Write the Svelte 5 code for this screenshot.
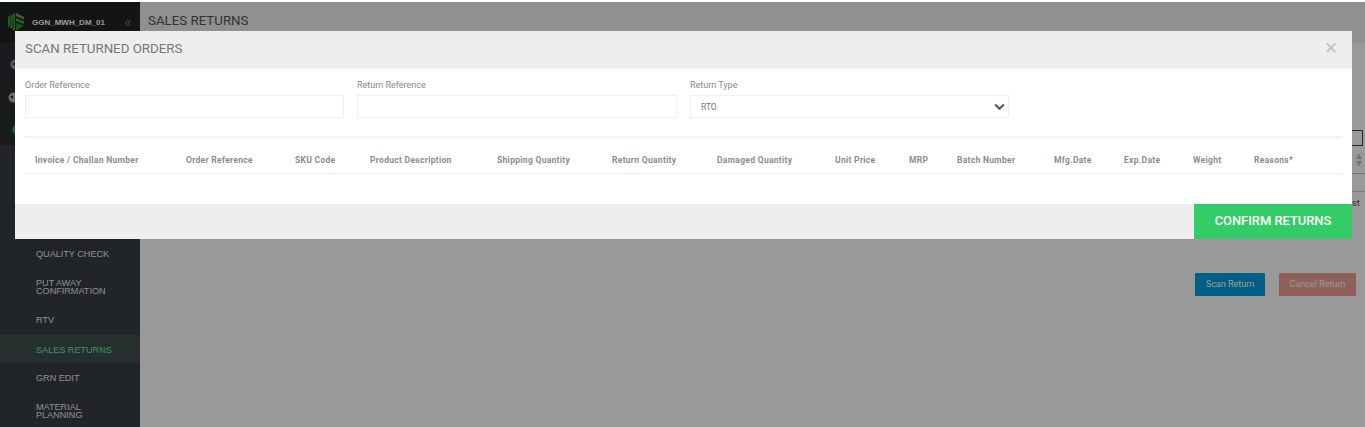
<script>
  const columns = [
    { label: 'Invoice / Challan Number', width: 151 },
    { label: 'Order Reference', width: 109 },
    { label: 'SKU Code', width: 75 },
    { label: 'Product Description', width: 127 },
    { label: 'Shipping Quantity', width: 115 },
    { label: 'Return Quantity', width: 105 },
    { label: 'Damaged Quantity', width: 118 },
    { label: 'Unit Price', width: 74 },
    { label: 'MRP', width: 48 },
    { label: 'Batch Number', width: 97 },
    { label: 'Mfg.Date', width: 70 },
    { label: 'Exp.Date', width: 69 },
    { label: 'Weight', width: 61 },
    { label: 'Reasons*', width: 78 }
  ];

  // only the left edge of these peeks out from under the modal
  const hiddenIcons = [
    { colour: '#8f9aa2', top: 59, left: 10 },
    { colour: '#b4b4b4', top: 92, left: 8 },
    { colour: '#35b07c', top: 124, left: 12 }
  ];
</script>

<div class="page">
  <aside class="sidebar">
    <div class="brand">
      <svg class="logo" width="18" height="20" viewBox="0 0 18 20">
        <path d="M8 1 L1 5 V14 L8 19 Z" fill="#379a35" />
        <path d="M3.4 4 V15.5 M5.8 3 V17.5" stroke="#17341a" stroke-width="0.6" />
        <path d="M9 1 L17 5 V7.5 L9 4 Z" fill="#62b04e" />
        <path d="M9 6 L17 9.5 V12 L9 9 Z" fill="#3fa23c" />
        <path d="M9 11 L17 13.5 L9 19 Z" fill="#238a2a" />
      </svg>
      <span class="warehouse">GGN_MWH_DM_01</span>
      <span class="collapse">«</span>
    </div>
    <div class="icons">
      {#each hiddenIcons as icon}
        <svg class="icon" style="top: {icon.top - 43}px; left: {icon.left}px" width="11" height="11" viewBox="0 0 11 11">
          <circle cx="5.5" cy="5.5" r="5" fill={icon.colour} />
          <circle cx="4" cy="5" r="1.3" fill="#2a2d31" />
        </svg>
      {/each}
    </div>
    <div class="spacer"></div>
    <nav class="menu">
      <a>QUALITY CHECK</a>
      <a class="two">PUT AWAY CONFIRMATION</a>
      <a class="tall">RTV</a>
      <a class="active">SALES RETURNS</a>
      <a>GRN EDIT</a>
      <a class="two">MATERIAL PLANNING</a>
    </nav>
  </aside>

  <main class="content">
    <header class="topbar"><h1>SALES RETURNS</h1></header>
    <div class="behind">
      <div class="filter-box"></div>
      <div class="behind-head">
        <svg width="8" height="14" viewBox="0 0 8 14"><path d="M4 1 L7 6 H1 Z M4 13 L1 8 H7 Z" fill="#bbb" /></svg>
      </div>
      <div class="behind-row"></div>
      <div class="behind-note">st</div>
      <div class="actions">
        <button class="scan">Scan Return</button>
        <button class="cancel">Cancel Return</button>
      </div>
    </div>
  </main>
</div>

<div class="overlay"></div>

<section class="modal">
  <header class="modal-head">
    <h2>SCAN RETURNED ORDERS</h2>
    <span class="close">×</span>
  </header>
  <div class="modal-body">
    <div class="fields">
      <label class="field">
        <span>Order Reference</span>
        <input type="text" />
      </label>
      <label class="field wide">
        <span>Return Reference</span>
        <input type="text" />
      </label>
      <label class="field">
        <span>Return Type</span>
        <div class="select">
          RTO
          <svg width="11" height="8" viewBox="0 0 11 8"><path d="M1.2 1.5 L5.5 5.8 L9.8 1.5" fill="none" stroke="#555" stroke-width="2" /></svg>
        </div>
      </label>
    </div>
    <div class="table-head">
      {#each columns as col}
        <div class="th" style="width: {col.width}px">{col.label}</div>
      {/each}
    </div>
  </div>
  <footer class="modal-foot">
    <button class="confirm">CONFIRM RETURNS</button>
  </footer>
</section>

<style>
  :global(body) {
    margin: 0;
    background: #fff;
    font-family: Roboto, "Liberation Sans", sans-serif;
    overflow: hidden;
  }
  .page {
    display: flex;
    height: 425px;
    margin-top: 2px;
  }
  .sidebar {
    width: 140px;
    flex: none;
    background: #373c43;
    display: flex;
    flex-direction: column;
  }
  .brand {
    height: 41px;
    background: #1f2226;
    display: flex;
    align-items: center;
    padding-left: 7px;
    box-sizing: border-box;
  }
  .logo {
    flex: none;
  }
  .warehouse {
    margin-left: 7px;
    font: bold 8px "Liberation Sans", sans-serif;
    color: #fff;
    width: 92px;
    flex: none;
  }
  .collapse {
    color: #6e6e6e;
    font-size: 16px;
    line-height: 16px;
  }
  .icons {
    position: relative;
    height: 103px;
    background: #2a2d31;
  }
  .icon {
    position: absolute;
  }
  .spacer {
    height: 94px;
  }
  .menu {
    display: flex;
    flex-direction: column;
  }
  .menu a {
    display: flex;
    align-items: center;
    box-sizing: border-box;
    height: 28px;
    padding: 2px 20px 0 36px;
    font: 9.1px/8px "Liberation Sans", sans-serif;
    color: #e8edf2;
  }
  .menu a.two {
    height: 36px;
    padding-top: 4px;
  }
  .menu a.tall {
    height: 32px;
  }
  .menu a.active {
    background: #3f504d;
    color: #68eeaa;
  }
  .content {
    flex: 1;
    background: #fff;
    min-width: 0;
  }
  .topbar {
    height: 41px;
    background: #f0f0f0;
    box-sizing: border-box;
    padding: 12px 0 0 8px;
  }
  h1 {
    margin: 0;
    font-size: 13.3px;
    font-weight: 400;
    line-height: 14px;
    color: #555;
  }
  .behind {
    position: relative;
    height: 384px;
  }
  .filter-box {
    position: absolute;
    right: 2px;
    top: 87px;
    width: 20px;
    height: 14px;
    border: 1px solid #444;
  }
  .behind-head {
    position: absolute;
    right: 0;
    left: 0;
    top: 103px;
    height: 27px;
    border-bottom: 1px solid #bbb;
    display: flex;
    justify-content: flex-end;
    align-items: center;
    padding-right: 2px;
  }
  .behind-row {
    position: absolute;
    right: 0;
    left: 0;
    top: 131px;
    height: 17px;
    border-bottom: 1px solid #ccc;
  }
  .behind-note {
    position: absolute;
    left: 1212px;
    top: 155px;
    font-size: 9px;
    color: #444;
  }
  .actions {
    position: absolute;
    right: 9px;
    top: 230px;
    display: flex;
    gap: 14px;
  }
  .actions button {
    height: 23px;
    border: 0;
    border-radius: 1px;
    padding: 0 0 1px;
    font: 9px Roboto, sans-serif;
    color: #fff;
  }
  .scan {
    width: 70px;
    background: #009ede;
  }
  .cancel {
    width: 77px;
    background: #ee9e96;
  }
  .overlay {
    position: fixed;
    inset: 0;
    top: 2px;
    background: rgba(0, 0, 0, 0.4);
  }
  .modal {
    position: fixed;
    left: 15px;
    top: 31px;
    width: 1337px;
    background: #fff;
    display: flex;
    flex-direction: column;
  }
  .modal-head {
    height: 38px;
    box-sizing: border-box;
    padding: 0 15px 4px 10px;
    background: #eee;
    display: flex;
    align-items: center;
    justify-content: space-between;
  }
  h2 {
    margin: 0;
    font-size: 13.3px;
    font-weight: 400;
    color: #777;
  }
  .close {
    font-size: 22px;
    line-height: 1;
    color: #c4c4c4;
  }
  .modal-body {
    height: 135px;
    padding: 0 10px;
    box-sizing: border-box;
  }
  .fields {
    display: flex;
    gap: 13px;
    height: 69px;
    padding-top: 11px;
    box-sizing: border-box;
    border-bottom: 2px solid #f3f3f3;
  }
  .field {
    width: 319px;
    display: flex;
    flex-direction: column;
    gap: 5px;
  }
  .field.wide {
    width: 320px;
  }
  .field span {
    font-size: 9px;
    line-height: 10px;
    color: #888;
  }
  .field input,
  .select {
    height: 23px;
    box-sizing: border-box;
    border: 1px solid #eee;
    padding: 0 10px;
    background: #fff;
  }
  .select {
    display: flex;
    align-items: center;
    justify-content: space-between;
    padding-right: 3px;
    font-size: 8.5px;
    color: #777;
  }
  .table-head {
    display: flex;
    height: 36px;
    align-items: center;
    border-bottom: 1px solid #eee;
    padding: 8px 0 0 10px;
    box-sizing: border-box;
  }
  .th {
    flex: none;
    font-size: 8.5px;
    font-weight: 700;
    letter-spacing: 0.3px;
    color: #8c8c8c;
    white-space: nowrap;
  }
  .modal-foot {
    height: 35px;
    background: #eee;
    display: flex;
    justify-content: flex-end;
  }
  .confirm {
    width: 158px;
    border: 0;
    background: #33cc66;
    color: #fff;
    font: 500 12.9px Roboto, sans-serif;
    padding: 0 0 2px;
  }
</style>
